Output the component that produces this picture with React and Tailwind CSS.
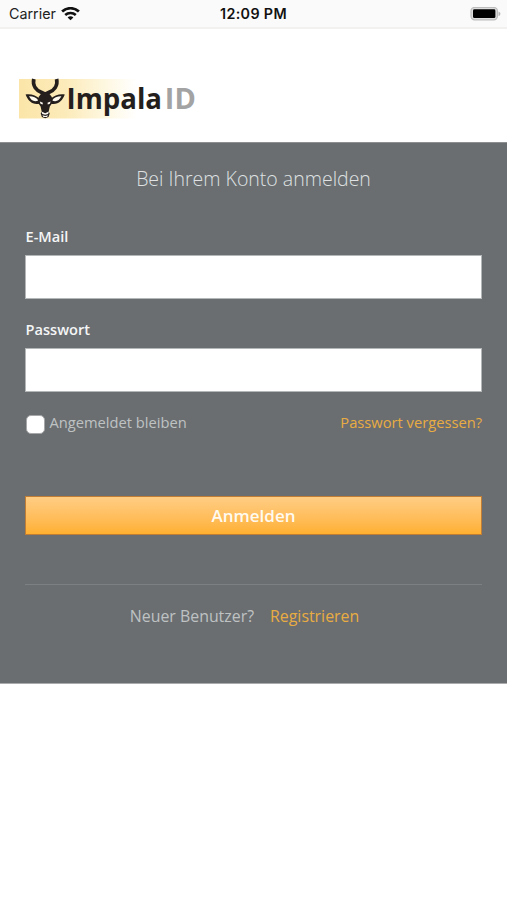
import React, {useState} from "react";

function WifiIcon() {
    return (
        <svg className="w-[19px] h-[14px]" viewBox="0 0 19 14" fill="none" stroke="#111">
            <path d="M1.1 4.6C5.8.1 13.2.1 17.9 4.6" strokeWidth="2.7"/>
            <path d="M4.2 8c3-2.8 7.6-2.8 10.6 0" strokeWidth="2.5"/>
            <path d="M9.5 13.3l-2.9-2.9c1.6-1.5 4.2-1.5 5.8 0z" fill="#111" stroke="none"/>
        </svg>
    )
}

function BatteryIcon() {
    return (
        <svg className="w-[31px] h-[14px]" viewBox="0 0 31 14">
            <rect x="1" y=".4" width="26.4" height="12.4" rx="3.6" fill="#ddd" stroke="#bcbcbc" strokeWidth="1.2"/>
            <rect x="3" y="2.3" width="22.4" height="8.8" rx="1.4" fill="#000"/>
            <path d="M28.5 4.4c2.5.9 2.5 3.7 0 4.6z" fill="#b5b5b5"/>
        </svg>
    )
}

function StatusBar() {
    return (
        <div className="grid h-[29px] grid-cols-3 items-center border-b-2 border-[#f3f1f0] bg-[#fafafa] pl-[9px] pr-[6px] font-['Inter',sans-serif] text-[14.3px] text-[#222]">
            <div className="flex items-center gap-[5px]">
                <span>Carrier</span>
                <WifiIcon/>
            </div>
            <span className="pr-[3px] text-center font-semibold tracking-[0.35px] text-[#111]">12:09 PM</span>
            <div className="flex justify-end"><BatteryIcon/></div>
        </div>
    )
}

function Logo() {
    return (
        <svg className="w-[180px] h-[50px]" viewBox="18 72 180 50">
            <defs>
                <linearGradient id="glow" x1="0" x2="1" y1="0" y2="0">
                    <stop offset="0" stopColor="#fbe5a8"/>
                    <stop offset=".4" stopColor="#fcebba"/>
                    <stop offset=".75" stopColor="#fef8e3"/>
                    <stop offset="1" stopColor="#fff"/>
                </linearGradient>
            </defs>
            <rect x="19" y="79" width="118" height="39.5" fill="url(#glow)"/>
            {/* horns */}
            <path d="M33.8 79c-1.6 7.200 3 11.400 7.400 13.200l4 2 4-2c4.400-1.800 9-6 7.400-13.200" fill="none" stroke="#241f1d" strokeWidth="3.700"/>
            {/* ears */}
            <path d="M25.6 94.500c5.400-.8 10.600.8 14.400 4.500l-.8 4.800c-6.800 1.400-11.200-3-13.600-9.300zM64.800 94.500c-5.400-.8-10.600.8-14.400 4.500l.8 4.800c6.800 1.400 11.200-3 13.600-9.300z" fill="#241f1d"/>
            <path d="M29 96.300c4.200-.1 7.200 1.300 9.400 4.100-4 2-7.200.2-9.400-4.100zM61.400 96.300c-4.200-.1-7.200 1.300-9.400 4.100 4 2 7.200.2 9.400-4.100z" fill="#fffaf0"/>
            {/* face */}
            <path d="M38.600 97l3.400-4.500h6.400l3.400 4.500 1 5.200-3 4.300-1.100 5 1 2-1.200 3.400-3.300 1.400-3.300-1.400-1.200-3.400 1-2-1.100-5-3-4.300z" fill="#241f1d"/>
            <path d="M39.800 101.600l3.100 1.200-.3 1.600-2.100-.7zM50.600 101.600l-3.100 1.200.3 1.600 2.100-.7zM41.400 111.600l3.800 1.700 3.800-1.700-.9 2.300-2.900.8-2.900-.8zM42.400 115.200l2.800.8 2.800-.8-1 1.700h-3.600z" fill="#fffaf0"/>
            <text x="66.5" y="108.5" textLength="95.5" lengthAdjust="spacingAndGlyphs" className="font-['Open_Sans',sans-serif] text-[29px] font-bold" fill="#241f1d">Impala</text>
            <text x="164.8" y="108.5" textLength="31" lengthAdjust="spacingAndGlyphs" className="font-['Open_Sans',sans-serif] text-[28px] font-bold" fill="#a3a3a3">ID</text>
        </svg>
    )
}

function TextField({label, name, type, value, onChange}) {
    return (
        <div>
            <label htmlFor={name} className="block pl-[0.5px] text-[14.6px] leading-5 font-semibold text-[#f5f6f6]">{label}</label>
            <input
                id={name}
                type={type}
                value={value}
                onChange={e => onChange(e.target.value)}
                className="mt-[9px] block h-11 w-full border border-[#b4b7b8] bg-white px-3 text-base text-gray-800 outline-none"
            />
        </div>
    )
}

function App() {
    const [email, setEmail] = useState("")
    const [password, setPassword] = useState("")
    const [remember, setRemember] = useState(false)

    return (
        <div className="h-[900px] w-[507px] overflow-hidden bg-white font-['Open_Sans',sans-serif]">
            <StatusBar/>
            <header className="h-[113px] pt-[43px] pl-[18px]">
                <Logo/>
            </header>
            <main className="h-[542px] border-y border-[#8d9091] border-b-[#a9abac] bg-[#6a6e71] px-[25px] pt-[22px]">
                <h1 className="text-center text-[19.5px] leading-7 font-light text-[#dfe1e2]">Bei Ihrem Konto anmelden</h1>
                <form onSubmit={e => e.preventDefault()}>
                    <div className="mt-[33px] flex flex-col gap-5">
                        <TextField label="E-Mail" name="email" type="email" value={email} onChange={setEmail}/>
                        <TextField label="Passwort" name="password" type="password" value={password} onChange={setPassword}/>
                    </div>
                    <div className="mt-5 flex items-start justify-between text-[14.7px] leading-5">
                        <label className="flex gap-[5px] pl-[0.5px] text-[#bfc2c3]">
                            <input
                                type="checkbox"
                                checked={remember}
                                onChange={e => setRemember(e.target.checked)}
                                className="mt-[3px] size-[19px] appearance-none rounded-[5px] border border-[#a5a7a8] bg-white checked:bg-[#ffb234]"
                            />
                            <span>Angemeldet bleiben</span>
                        </label>
                        <a href="#" className="text-[#e9ac42]">Passwort vergessen?</a>
                    </div>
                    <button className="mt-[62px] block h-[39px] w-full border border-[#c07d35] bg-linear-to-b from-[#ffcd83] to-[#ffb02e] text-[17px] font-semibold text-[#fffaf0]">
                        Anmelden
                    </button>
                </form>
                <div className="mt-[49px] flex justify-center gap-4 border-t border-[#7c8083] pt-[19px] pr-[18px] text-[15.9px] leading-6">
                    <span className="text-[#bfc2c3]">Neuer Benutzer?</span>
                    <a href="#" className="text-[#e9ac42]">Registrieren</a>
                </div>
            </main>
        </div>
    )
}

export default App;
